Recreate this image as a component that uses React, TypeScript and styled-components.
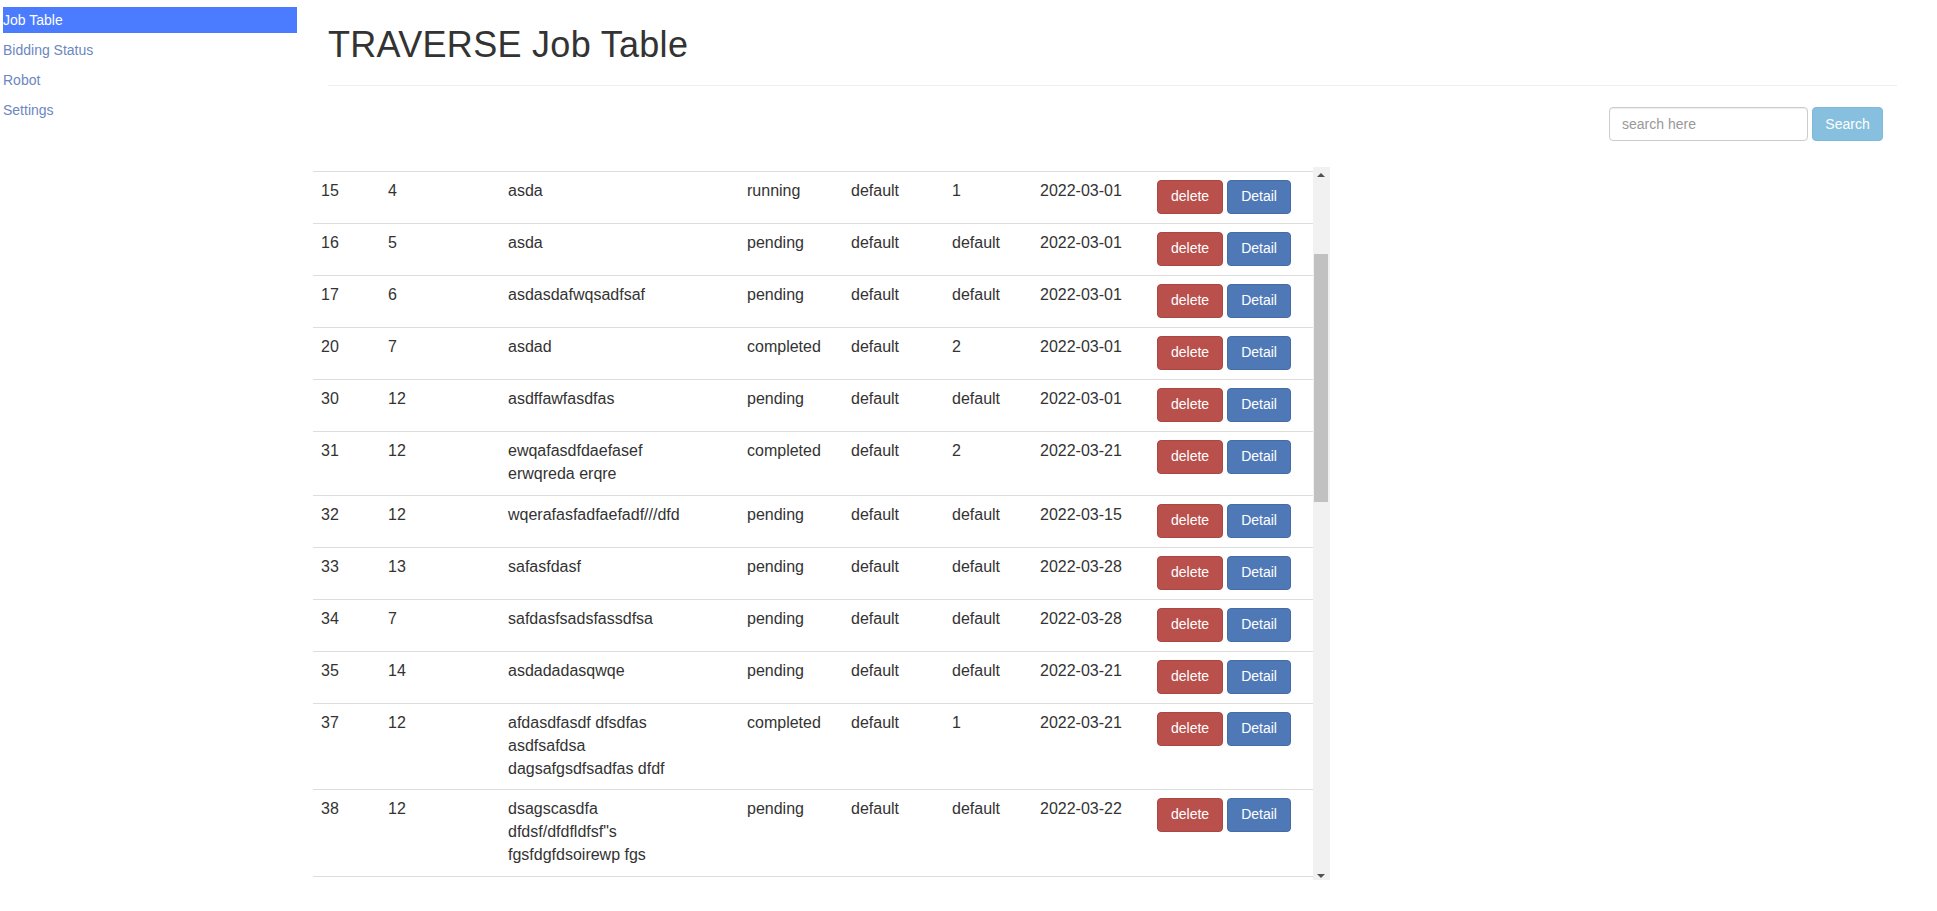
import React, { useEffect, useRef, useState } from 'react';
import styled, { createGlobalStyle } from 'styled-components';

const GlobalStyle = createGlobalStyle`
  html, body {
    margin: 0;
    padding: 0;
    background: #ffffff;
  }
  body {
    font-family: "Liberation Sans", Arial, Helvetica, sans-serif;
    font-size: 14px;
    color: #333333;
  }
  * {
    box-sizing: border-box;
  }
`;

type Job = {
  id: number;
  robot: number;
  content: string;
  status: string;
  type: string;
  priority: string;
  date: string;
};

// rows above the first visible one, hidden by the scroll position
const headJobs: Job[] = [
  { id: 12, robot: 1, content: 'asdasd', status: 'completed', type: 'default', priority: '1', date: '2022-02-28' },
  { id: 13, robot: 2, content: 'qwerqwer', status: 'completed', type: 'default', priority: 'default', date: '2022-02-28' },
  { id: 14, robot: 3, content: 'asdfasdf\nzxcvzxcv', status: 'running', type: 'default', priority: '2', date: '2022-03-01' },
];

const jobs: Job[] = [
  { id: 15, robot: 4, content: 'asda', status: 'running', type: 'default', priority: '1', date: '2022-03-01' },
  { id: 16, robot: 5, content: 'asda', status: 'pending', type: 'default', priority: 'default', date: '2022-03-01' },
  { id: 17, robot: 6, content: 'asdasdafwqsadfsaf', status: 'pending', type: 'default', priority: 'default', date: '2022-03-01' },
  { id: 20, robot: 7, content: 'asdad', status: 'completed', type: 'default', priority: '2', date: '2022-03-01' },
  { id: 30, robot: 12, content: 'asdffawfasdfas', status: 'pending', type: 'default', priority: 'default', date: '2022-03-01' },
  { id: 31, robot: 12, content: 'ewqafasdfdaefasef\nerwqreda erqre', status: 'completed', type: 'default', priority: '2', date: '2022-03-21' },
  { id: 32, robot: 12, content: 'wqerafasfadfaefadf///dfd', status: 'pending', type: 'default', priority: 'default', date: '2022-03-15' },
  { id: 33, robot: 13, content: 'safasfdasf', status: 'pending', type: 'default', priority: 'default', date: '2022-03-28' },
  { id: 34, robot: 7, content: 'safdasfsadsfassdfsa', status: 'pending', type: 'default', priority: 'default', date: '2022-03-28' },
  { id: 35, robot: 14, content: 'asdadadasqwqe', status: 'pending', type: 'default', priority: 'default', date: '2022-03-21' },
  { id: 37, robot: 12, content: 'afdasdfasdf dfsdfas\nasdfsafdsa\ndagsafgsdfsadfas dfdf', status: 'completed', type: 'default', priority: '1', date: '2022-03-21' },
  { id: 38, robot: 12, content: 'dsagscasdfa\ndfdsf/dfdfldfsf"s\nfgsfdgfdsoirewp fgs', status: 'pending', type: 'default', priority: 'default', date: '2022-03-22' },
];

const tailJobs: Job[] = Array.from({ length: 20 }, (_, i) => ({
  id: 39 + i,
  robot: (i % 9) + 3,
  content: ['asdfqwer', 'zxcvasdf', 'qwerty asdf', 'fdsafdsa'][i % 4],
  status: i % 3 === 0 ? 'completed' : 'pending',
  type: 'default',
  priority: i % 4 === 1 ? '1' : 'default',
  date: `2022-03-${String(22 + (i % 8)).padStart(2, '0')}`,
}));

const columns = [67, 120, 239, 104, 101, 88, 117, 164];
const headers = ['ID', 'Robot', 'Content', 'Status', 'Type', 'Priority', 'Date', 'Action'];

const Page = styled.div`
  display: flex;
  height: 100vh;
  overflow: hidden;
`;

const Sidebar = styled.nav`
  width: 300px;
  flex-shrink: 0;
  padding: 7px 3px 0;
  display: flex;
  flex-direction: column;
  gap: 4px;
`;

const NavItem = styled.a<{ $active?: boolean }>`
  display: block;
  height: 26px;
  line-height: 26px;
  font-size: 14px;
  text-decoration: none;
  cursor: pointer;
  color: ${(p) => (p.$active ? '#ffffff' : '#6c87bf')};
  background: ${(p) => (p.$active ? '#4b7bff' : 'transparent')};
`;

const Main = styled.main`
  flex: 1;
  display: flex;
  flex-direction: column;
  padding: 0 40px 0 13px;
`;

const PageHeader = styled.div`
  margin-left: 15px;
  padding: 25px 0 9px;
  border-bottom: 1px solid #eeeeee;
`;

const Title = styled.h1`
  margin: 0 0 11px;
  font-size: 36px;
  font-weight: 500;
  line-height: 1.1;
  letter-spacing: 0.3px;
  color: #333333;
`;

const SearchRow = styled.form`
  display: flex;
  justify-content: flex-end;
  gap: 4px;
  margin-top: 21px;
  padding-right: 14px;
`;

const SearchInput = styled.input`
  width: 199px;
  height: 34px;
  padding: 6px 12px;
  font-family: inherit;
  font-size: 14px;
  color: #555555;
  border: 1px solid #cccccc;
  border-radius: 4px;
  box-shadow: inset 0 1px 1px rgba(0, 0, 0, 0.075);
  outline: none;
  &::placeholder {
    color: #999999;
  }
`;

const SearchButton = styled.button`
  width: 71px;
  height: 34px;
  font-family: inherit;
  font-size: 14px;
  color: #ffffff;
  background: #87c0df;
  border: 1px solid #80bad9;
  border-radius: 4px;
  cursor: pointer;
`;

const TableFrame = styled.div`
  display: flex;
  width: 1017px;
  height: 713px;
  margin-top: 26px;
`;

const TableScroll = styled.div`
  flex: 1;
  overflow-y: scroll;
  overflow-x: hidden;
  scrollbar-width: none;
  &::-webkit-scrollbar {
    display: none;
  }
`;

const ScrollTrack = styled.div`
  width: 17px;
  flex-shrink: 0;
  display: flex;
  flex-direction: column;
  background: #f1f1f1;
`;

const ArrowButton = styled.div<{ $dir: 'up' | 'down' }>`
  height: 17px;
  display: flex;
  justify-content: center;
  align-items: ${(p) => (p.$dir === 'up' ? 'center' : 'flex-end')};
  padding-bottom: ${(p) => (p.$dir === 'up' ? '0' : '2px')};
  &::after {
    content: '';
    width: 0;
    height: 0;
    margin-left: -1px;
    border-left: 4px solid transparent;
    border-right: 4px solid transparent;
    ${(p) =>
      p.$dir === 'up'
        ? 'border-bottom: 4px solid #505050;'
        : 'border-top: 4px solid #505050;'}
  }
`;

const ThumbArea = styled.div`
  flex: 1;
  position: relative;
`;

const Thumb = styled.div`
  position: absolute;
  left: 1px;
  right: 2px;
  background: #c1c1c1;
`;

const Table = styled.table`
  width: 1000px;
  table-layout: fixed;
  border-collapse: collapse;
  border-spacing: 0;
  font-size: 16px;
  line-height: 1.42857;
  color: #333333;
`;

const Col = styled.col<{ $w: number }>`
  width: ${(p) => p.$w}px;
`;

const Th = styled.th`
  padding: 8px;
  text-align: left;
  font-weight: bold;
  vertical-align: bottom;
  border-bottom: 2px solid #dddddd;
`;

const Td = styled.td`
  padding: 8px 8px 9px;
  vertical-align: top;
  border-top: 1px solid #dddddd;
  white-space: pre-line;
`;

const ActionButton = styled.button<{ $kind: 'danger' | 'primary' }>`
  display: inline-block;
  height: 34px;
  padding: 6px 13px;
  margin-right: 4px;
  font-family: inherit;
  font-size: 14px;
  line-height: 1.42857;
  color: #ffffff;
  vertical-align: middle;
  border-radius: 4px;
  cursor: pointer;
  background: ${(p) => (p.$kind === 'danger' ? '#b9504c' : '#4f79b6')};
  border: 1px solid ${(p) => (p.$kind === 'danger' ? '#a94743' : '#456ca6')};
`;

function JobRow({ job, rowRef }: { job: Job; rowRef?: React.Ref<HTMLTableRowElement> }) {
  return (
    <tr ref={rowRef}>
      <Td>{job.id}</Td>
      <Td>{job.robot}</Td>
      <Td>{job.content}</Td>
      <Td>{job.status}</Td>
      <Td>{job.type}</Td>
      <Td>{job.priority}</Td>
      <Td>{job.date}</Td>
      <Td>
        <ActionButton $kind="danger">delete</ActionButton>
        <ActionButton $kind="primary">Detail</ActionButton>
      </Td>
    </tr>
  );
}

export default function App() {
  const scrollRef = useRef<HTMLDivElement>(null);
  const firstRef = useRef<HTMLTableRowElement>(null);
  const [thumb, setThumb] = useState({ top: 0, height: 0 });

  const updateThumb = () => {
    const box = scrollRef.current;
    if (!box) return;
    const track = box.clientHeight - 34;
    const height = Math.max(20, (track * box.clientHeight) / box.scrollHeight);
    const range = box.scrollHeight - box.clientHeight;
    const top = range > 0 ? (box.scrollTop / range) * (track - height) : 0;
    setThumb({ top, height });
  };

  // keep row 15 just under the top edge, as in the saved view
  useEffect(() => {
    const box = scrollRef.current;
    const row = firstRef.current;
    if (!box || !row) return;
    const offset = row.getBoundingClientRect().top - box.getBoundingClientRect().top + box.scrollTop;
    box.scrollTop = offset - 5;
    updateThumb();
  }, []);

  return (
    <>
      <GlobalStyle />
      <Page>
        <Sidebar>
          <NavItem $active>Job Table</NavItem>
          <NavItem>Bidding Status</NavItem>
          <NavItem>Robot</NavItem>
          <NavItem>Settings</NavItem>
        </Sidebar>
        <Main>
          <PageHeader>
            <Title>TRAVERSE Job Table</Title>
          </PageHeader>
          <SearchRow onSubmit={(e) => e.preventDefault()}>
            <SearchInput placeholder="search here" />
            <SearchButton type="submit">Search</SearchButton>
          </SearchRow>
          <TableFrame>
            <TableScroll ref={scrollRef} onScroll={updateThumb}>
              <Table>
                <colgroup>
                  {columns.map((w, i) => (
                    <Col key={i} $w={w} />
                  ))}
                </colgroup>
                <thead>
                  <tr>
                    {headers.map((h) => (
                      <Th key={h}>{h}</Th>
                    ))}
                  </tr>
                </thead>
                <tbody>
                  {headJobs.map((job) => (
                    <JobRow key={job.id} job={job} />
                  ))}
                  {jobs.map((job, i) => (
                    <JobRow key={job.id} job={job} rowRef={i === 0 ? firstRef : undefined} />
                  ))}
                  {tailJobs.map((job) => (
                    <JobRow key={job.id} job={job} />
                  ))}
                </tbody>
              </Table>
            </TableScroll>
            <ScrollTrack>
              <ArrowButton $dir="up" />
              <ThumbArea>
                <Thumb style={{ top: thumb.top, height: thumb.height }} />
              </ThumbArea>
              <ArrowButton $dir="down" />
            </ScrollTrack>
          </TableFrame>
        </Main>
      </Page>
    </>
  );
}
